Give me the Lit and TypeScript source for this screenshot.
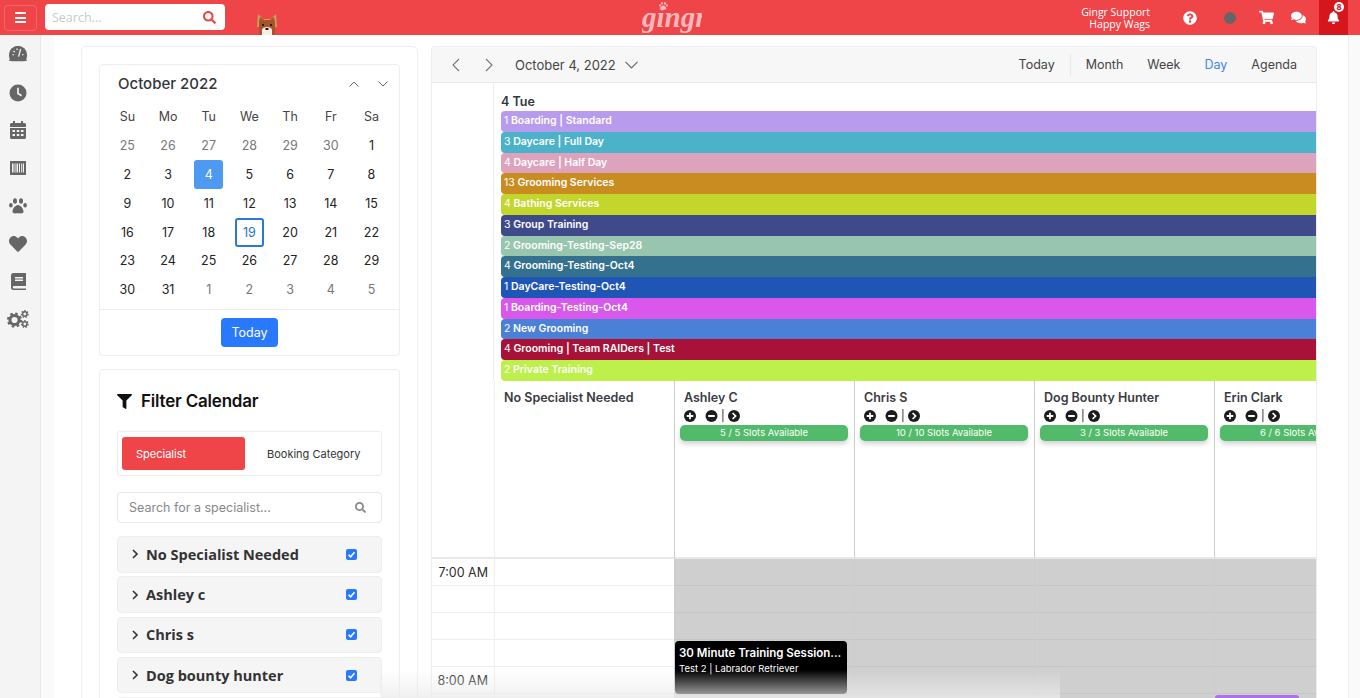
import { LitElement, html, css } from "lit";
import { customElement } from "lit/decorators.js";

const P = {
  search:
    "M505 442.7L405.3 343c-4.5-4.5-10.6-7-17-7H372c27.6-35.3 44-79.7 44-128C416 93.1 322.9 0 208 0S0 93.1 0 208s93.1 208 208 208c48.3 0 92.7-16.4 128-44v16.3c0 6.4 2.5 12.5 7 17l99.7 99.7c9.4 9.4 24.6 9.4 33.9 0l28.3-28.3c9.4-9.4 9.4-24.6.1-34zM208 336c-70.7 0-128-57.2-128-128 0-70.7 57.2-128 128-128 70.7 0 128 57.2 128 128 0 70.7-57.2 128-128 128z",
  heart:
    "M462.3 62.6C407.5 15.9 326 24.3 275.7 76.2L256 96.5l-19.7-20.3C186.1 24.3 104.5 15.9 49.7 62.6c-62.8 53.6-66.1 149.8-9.9 207.9l193.5 199.8c12.5 12.9 32.8 12.9 45.3 0l193.5-199.8c56.3-58.1 53-154.3-9.8-207.9z",
  bell:
    "M224 512c35.32 0 63.97-28.65 63.97-64H160.03c0 35.35 28.65 64 63.97 64zm215.39-149.71c-19.32-20.76-55.47-51.99-55.47-154.29 0-77.7-54.48-139.9-127.94-155.16V32c0-17.67-14.32-32-31.98-32s-31.98 14.33-31.98 32v20.84C118.56 68.1 64.08 130.3 64.08 208c0 102.3-36.15 133.53-55.47 154.29-6 6.45-8.66 14.16-8.61 21.71.11 16.4 12.98 32 32.1 32h383.8c19.12 0 32-15.6 32.1-32 .05-7.55-2.61-15.27-8.61-21.71z",
  cart:
    "M528.12 301.319l47.273-208C578.806 78.301 567.391 64 551.99 64H159.208l-9.166-44.81C147.758 8.021 137.93 0 126.529 0H24C10.745 0 0 10.745 0 24v16c0 13.255 10.745 24 24 24h69.883l70.248 343.435C147.325 417.1 136 435.222 136 456c0 30.928 25.072 56 56 56s56-25.072 56-56c0-15.674-6.447-29.835-16.824-40h209.647C430.447 426.165 424 440.326 424 456c0 30.928 25.072 56 56 56s56-25.072 56-56c0-22.172-12.888-41.332-31.579-50.405l5.517-24.276c3.413-15.018-8.002-29.319-23.403-29.319H218.117l-6.545-32h293.145c11.206 0 20.92-7.754 23.403-18.681z",
  comments:
    "M416 192c0-88.4-93.1-160-208-160S0 103.6 0 192c0 34.3 14.1 65.9 38 92-13.4 30.2-35.5 54.2-35.8 54.5-2.2 2.3-2.8 5.7-1.5 8.7S4.8 352 8 352c36.6 0 66.9-12.3 88.7-25 32.2 15.7 70.3 25 111.3 25 114.9 0 208-71.6 208-160zm122 220c23.9-26 38-57.7 38-92 0-66.9-53.5-124.2-129.3-148.1.9 6.6 1.3 13.3 1.3 20.1 0 105.9-107.7 192-240 192-10.8 0-21.3-.8-31.7-1.9C207.8 439.6 281.8 480 368 480c41 0 79.1-9.2 111.3-25 21.8 12.7 52.1 25 88.7 25 3.2 0 6.1-1.9 7.3-4.8 1.3-2.9.7-6.3-1.5-8.7-.3-.3-22.4-24.2-35.8-54.5z",
  question:
    "M504 256c0 136.997-111.043 248-248 248S8 392.997 8 256C8 119.083 119.043 8 256 8s248 111.083 248 248zM262.655 90c-54.497 0-89.255 22.957-116.549 63.758-3.536 5.286-2.353 12.415 2.715 16.258l34.699 26.31c5.205 3.947 12.621 3.008 16.665-2.122 17.864-22.658 30.113-35.797 57.303-35.797 20.429 0 45.698 13.148 45.698 32.958 0 14.976-12.363 22.667-32.534 33.976C247.128 238.528 216 254.941 216 296v4c0 6.627 5.373 12 12 12h56c6.627 0 12-5.373 12-12v-1.333c0-28.462 83.186-29.647 83.186-106.667 0-58.002-60.165-102-116.531-102zM256 338c-25.365 0-46 20.635-46 46 0 25.364 20.635 46 46 46s46-20.636 46-46c0-25.365-20.635-46-46-46z",
  filter:
    "M487.976 0H24.028C2.71 0-8.047 25.866 7.058 40.971L192 225.941V432c0 7.831 3.821 15.17 10.237 19.662l80 55.98C298.02 518.69 320 507.493 320 487.98V225.941l184.947-184.97C520.021 25.896 509.338 0 487.976 0z",
};

const icon = (d: string, size: number, vb = "0 0 512 512") =>
  html`<svg class="ico" width=${size} height=${size} viewBox=${vb}><path d=${d}></path></svg>`;

const NAV = [
  html`<svg width="20" height="20" viewBox="0 0 20 20"><path d="M1 16.5a9.5 9.5 0 0 1 18 0z" fill="#666" transform="translate(0 -1.5) scale(1 1.06)"></path><circle cx="10" cy="10" r="9.2" fill="#666" clip-path="inset(0 0 3px 0)"></circle><path d="M10.6 11.6 12.6 4M4.5 9.5l1.4.5M5.5 6l1.2 1M9 3.6v1.4M15.5 9.5l-1.4.5" stroke="#f4f4f4" stroke-width="1.3" fill="none"></path></svg>`,
  html`<svg width="18" height="18" viewBox="0 0 18 18"><circle cx="9" cy="9" r="8.5" fill="#666"></circle><path d="M9 3.8V9.6l3.6 2.2" stroke="#f4f4f4" stroke-width="1.7" fill="none"></path></svg>`,
  html`<svg width="16" height="18" viewBox="0 0 16 18"><path d="M3 0h2v2h6V0h2v2h1.5A1.5 1.5 0 0 1 16 3.5V6H0V3.5A1.5 1.5 0 0 1 1.500 2H3zM0 7h16v9.500a1.500 1.500 0 0 1-1.500 1.500h-13A1.500 1.500 0 0 1 0 16.500z" fill="#666"></path><path d="M2.500 9h2.500v2H2.500zm4.300 0h2.500v2H6.800zm4.200 0h2.500v2H11zM2.500 13h2.500v2H2.500zm4.300 0h2.500v2H6.800zm4.200 0h2.500v2H11z" fill="#f4f4f4"></path></svg>`,
  html`<svg width="16" height="14" viewBox="0 0 16 14"><path d="M0 0h16v14H0z" fill="#666"></path><path d="M2 2.500h1.500v9H2zm2.500 0h1v9h-1zm2 0h1.500v9H6.500zm2.500 0h1v9H9zm2 0h.8v9H11zm1.800 0h1.200v9h-1.200z" fill="#f4f4f4"></path></svg>`,
  html`<svg width="18" height="16" viewBox="0 0 18 16"><ellipse cx="1.900" cy="7.200" rx="1.800" ry="2.200" fill="#666"></ellipse><ellipse cx="6" cy="3" rx="2" ry="2.800" fill="#666"></ellipse><ellipse cx="12" cy="3" rx="2" ry="2.800" fill="#666"></ellipse><ellipse cx="16.100" cy="7.200" rx="1.800" ry="2.200" fill="#666"></ellipse><path d="M9 7c2.800 0 5.500 4 5.500 6.500 0 2.500-3 1.800-5.500 1.800s-5.500.7-5.500-1.800C3.500 11 6.200 7 9 7z" fill="#666"></path></svg>`,
  html`<svg width="18" height="18" viewBox="0 0 512 512"><path d=${P.heart} fill="#666"></path></svg>`,
  html`<svg width="15" height="17" viewBox="0 0 15 17"><path d="M2.500 0H15v13H3a1 1 0 0 0 0 2.500h12V17H2.500A2.500 2.500 0 0 1 0 14.500v-12A2.500 2.500 0 0 1 2.500 0z" fill="#666"></path><path d="M4 4h8v1.500H4zm0 2.500h8V8H4z" fill="#f4f4f4"></path></svg>`,
  html`<svg width="22" height="18" viewBox="0 0 22 18"><circle cx="7.500" cy="10" r="4.600" fill="none" stroke="#666" stroke-width="3"></circle><circle cx="7.500" cy="10" r="6.500" fill="none" stroke="#666" stroke-width="2.200" stroke-dasharray="2.500 2.600"></circle><circle cx="17.800" cy="4" r="2.200" fill="none" stroke="#666" stroke-width="1.500"></circle><circle cx="17.800" cy="4" r="3.400" fill="none" stroke="#666" stroke-width="1.200" stroke-dasharray="1.500 1.500"></circle><circle cx="17.800" cy="14" r="2.200" fill="none" stroke="#666" stroke-width="1.500"></circle><circle cx="17.800" cy="14" r="3.400" fill="none" stroke="#666" stroke-width="1.200" stroke-dasharray="1.500 1.500"></circle></svg>`,
];

const WEEKDAYS = ["Su", "Mo", "Tu", "We", "Th", "Fr", "Sa"];
const DAYS: [number, boolean][] = [
  ...[25, 26, 27, 28, 29, 30].map((d): [number, boolean] => [d, true]),
  ...Array.from({ length: 31 }, (_, i): [number, boolean] => [i + 1, false]),
  ...[1, 2, 3, 4, 5].map((d): [number, boolean] => [d, true]),
];

const BARS: [string, string, string][] = [
  ["1", "Boarding | Standard", "#b89bec"],
  ["3", "Daycare | Full Day", "#4cb2c9"],
  ["4", "Daycare | Half Day", "#dda3bd"],
  ["13", "Grooming Services", "#c98c20"],
  ["4", "Bathing Services", "#c2d62c"],
  ["3", "Group Training", "#3f4a8a"],
  ["2", "Grooming-Testing-Sep28", "#97c5ad"],
  ["4", "Grooming-Testing-Oct4", "#33718f"],
  ["1", "DayCare-Testing-Oct4", "#1f55b5"],
  ["1", "Boarding-Testing-Oct4", "#d957ea"],
  ["2", "New Grooming", "#4a80d6"],
  ["4", "Grooming | Team RAIDers | Test", "#a81238"],
  ["2", "Private Training", "#bdf04b"],
];

const STAFF: [string, string][] = [
  ["Ashley C", "5 / 5 Slots Available"],
  ["Chris S", "10 / 10 Slots Available"],
  ["Dog Bounty Hunter", "3 / 3 Slots Available"],
  ["Erin Clark", "6 / 6 Slots Available"],
];

const FILTERS = ["No Specialist Needed", "Ashley c", "Chris s", "Dog bounty hunter", "Erin clark"];
const SLOTS = [0, 1, 2, 3, 4, 5];

@customElement("app-root")
export class AppRoot extends LitElement {
  static styles = css`
    :host {
      display: block;
      height: 698px;
      overflow: hidden;
      position: relative;
      background: #fff;
      font-family: Inter, "Liberation Sans", sans-serif;
      color: #333;
    }
    svg {
      display: block;
      flex: none;
    }
    .ico {
      fill: currentColor;
    }
    .topbar {
      height: 35px;
      background: #ef4549;
      display: flex;
      align-items: center;
      padding: 0 12px 0 4px;
      color: #fff;
      font-family: "Open Sans", sans-serif;
    }
    .left-group,
    .right-group {
      flex: 1;
      display: flex;
      align-items: center;
      height: 100%;
    }
    .right-group {
      justify-content: flex-end;
    }
    .burger {
      width: 33px;
      height: 26px;
      border: 1px solid #f2666a;
      border-radius: 4px;
      box-sizing: border-box;
      display: flex;
      flex-direction: column;
      justify-content: center;
      align-items: center;
      gap: 2.5px;
      margin-right: 8px;
    }
    .burger i {
      display: block;
      width: 11px;
      height: 2px;
      background: #fff;
    }
    .top-search {
      width: 180px;
      height: 26px;
      background: #fff;
      border-radius: 4px;
      box-sizing: border-box;
      padding: 0 9px 0 7px;
      display: flex;
      align-items: center;
      justify-content: space-between;
      font-size: 12.5px;
      color: #c9c9c9;
      margin-bottom: 1px;
    }
    .top-search .ico {
      color: #ef4549;
    }
    .dog {
      align-self: flex-end;
      margin-left: 31px;
    }
    .logo {
      position: relative;
      margin-right: 8px;
      width: 60px;
      height: 35px;
      overflow: hidden;
      color: #fbb9bb;
      font: italic bold 29px/33px "Liberation Serif", serif;
      text-align: center;
    }
    .logo svg {
      position: absolute;
      left: 17px;
      top: 2px;
    }
    .logo span {
      position: absolute;
      left: 0;
      right: 0;
      top: 1px;
    }
    .who {
      font-size: 10.5px;
      line-height: 12px;
      text-align: right;
      margin-right: 22px;
    }
    .tool {
      width: 36px;
      display: flex;
      justify-content: center;
    }
    .avatar {
      width: 12px;
      height: 12px;
      border-radius: 50%;
      background: #666;
    }
    .bell {
      position: relative;
      width: 29px;
      height: 35px;
      margin-left: 3px;
      background: #d5161d;
      display: flex;
      align-items: center;
      justify-content: center;
    }
    .badge {
      position: absolute;
      top: 2px;
      right: 4px;
      width: 10px;
      height: 10px;
      border-radius: 50%;
      background: #fff;
      color: #c4161c;
      font: 700 9px/10px "Open Sans", sans-serif;
      text-align: center;
    }
    .shell {
      display: flex;
      height: 663px;
    }
    .sidebar {
      width: 41px;
      box-sizing: border-box;
      flex: none;
      background: #f4f4f4;
      border-right: 1px solid #e8e8e8;
      padding-top: 1px;
      display: grid;
      grid-auto-rows: 37.8px;
      justify-items: center;
      align-items: center;
      padding-right: 4px;
    }
    .gutter {
      width: 13px;
      flex: none;
      background: #fafafa;
    }
    .gutter.end {
      width: 11px;
      border-left: 1px solid #eee;
    }
    .content {
      flex: 1;
      display: flex;
      gap: 13px;
      padding: 11px 32px 0 27px;
      overflow: hidden;
    }
    .side-panel {
      width: 337px;
      flex: none;
      box-sizing: border-box;
      height: 800px;
      border: 1px solid #eee;
      border-radius: 5px;
      padding: 17px;
    }
    .card {
      border: 1px solid #eee;
      border-radius: 4px;
      background: #fff;
    }
    .cal-card {
      height: 292px;
      box-sizing: border-box;
      margin-bottom: 13px;
      display: flex;
      flex-direction: column;
    }
    .cal-head {
      display: flex;
      align-items: center;
      justify-content: space-between;
      height: 37px;
      padding: 0 11px 0 18px;
      font-size: 15px;
      font-weight: 500;
      color: #33353b;
    }
    .cal-arrows {
      display: flex;
      gap: 19px;
      color: #666;
    }
    .cal-grid {
      display: grid;
      grid-template-columns: repeat(7, 40.700px);
      grid-auto-rows: 28.900px;
      padding: 0 7px;
      font-size: 12.500px;
      color: #222;
      flex: 1;
      align-content: start;
    }
    .cal-grid > div {
      display: flex;
      align-items: center;
      justify-content: center;
    }
    .cal-grid .wd {
      color: #444;
    }
    .cal-grid .muted {
      color: #777;
    }
    .cal-grid b {
      font-weight: 400;
      width: 29px;
      height: 29px;
      box-sizing: border-box;
      display: flex;
      align-items: center;
      justify-content: center;
      border-radius: 3px;
    }
    .cal-grid b.sel {
      background: #4e99f1;
      color: #fff;
    }
    .cal-grid b.now {
      border: 2px solid #2979d9;
      color: #2271d0;
    }
    .cal-foot {
      height: 45px;
      border-top: 1px solid #eee;
      display: flex;
      align-items: center;
      justify-content: center;
    }
    .today-btn {
      width: 57px;
      height: 29px;
      border-radius: 4px;
      background: #2979ff;
      color: #fff;
      font-size: 12.500px;
      display: flex;
      align-items: center;
      justify-content: center;
    }
    .filter-card {
      padding: 17px 17px 0;
      height: 500px;
    }
    .filter-title {
      display: flex;
      align-items: center;
      gap: 9px;
      height: 28px;
      margin-bottom: 16px;
      font-size: 17px;
      font-weight: 600;
      letter-spacing: -0.2px;
      color: #111;
    }
    .tabs {
      height: 45px;
      box-sizing: border-box;
      border: 1px solid #eee;
      border-radius: 3px;
      padding: 5px 4px;
      display: flex;
      align-items: stretch;
      font-size: 11px;
      margin-bottom: 16px;
    }
    .tab-on {
      width: 123px;
      background: #ef4549;
      color: #fff;
      border-radius: 3px;
      display: flex;
      align-items: center;
      padding-left: 14px;
      box-sizing: border-box;
    }
    .tab-off {
      display: flex;
      align-items: center;
      padding-left: 22px;
      color: #333;
    }
    .spec-search {
      height: 31px;
      box-sizing: border-box;
      border: 1px solid #e6e6e6;
      border-radius: 4px;
      display: flex;
      align-items: center;
      justify-content: space-between;
      padding: 0 15px 0 11px;
      font-size: 12.500px;
      color: #888;
      margin-bottom: 13px;
    }
    .spec-search .ico {
      color: #888;
    }
    .spec-row {
      height: 36.500px;
      box-sizing: border-box;
      background: #f5f5f5;
      border: 1px solid #eee;
      border-radius: 4px;
      margin-bottom: 3.800px;
      display: flex;
      align-items: center;
      padding: 0 24px 0 14px;
      gap: 7px;
      font: 700 14.500px "Open Sans", sans-serif;
      color: #333;
    }
    .spec-row span {
      flex: 1;
    }
    .check {
      width: 11px;
      height: 11px;
      border-radius: 2px;
      background: #2979ff;
    }
    .sched {
      width: 886px;
      flex: none;
      box-sizing: border-box;
      height: 700px;
      border: 1px solid #eee;
      border-radius: 3px 3px 0 0;
      overflow: hidden;
    }
    .sched-bar {
      height: 35px;
      background: #f7f7f7;
      border-bottom: 1px solid #e9e9e9;
      display: flex;
      align-items: center;
      padding: 0 19px 0 19px;
      font-size: 12.500px;
      color: #444;
    }
    .sched-bar .ico-stroke {
      color: #777;
    }
    .date-pick {
      margin-left: 21px;
      display: flex;
      align-items: center;
      gap: 9px;
      font-size: 13px;
    }
    .nav-next {
      margin-left: 23px;
    }
    .views {
      margin-left: auto;
      display: flex;
      align-items: center;
      gap: 24px;
      font-size: 12.500px;
    }
    .views .sep {
      width: 1px;
      height: 22px;
      background: #e4e8ee;
      margin: 0 -9px;
    }
    .views .on {
      color: #3d85f0;
    }
    .allday {
      height: 298px;
      display: flex;
    }
    .corner {
      width: 62px;
      flex: none;
      border-right: 1px solid #eee;
      box-sizing: border-box;
    }
    .bars {
      flex: 1;
      padding: 10px 0 0 7px;
      min-width: 0;
    }
    .day-label {
      height: 18px;
      font-size: 12.500px;
      font-weight: 600;
      color: #33353b;
      line-height: 17px;
    }
    .bar {
      height: 20.770px;
      box-sizing: border-box;
      border-radius: 4px 0 0 4px;
      padding-left: 3px;
      color: #fff;
      font-size: 10.500px;
      font-weight: 600;
      line-height: 19px;
      white-space: nowrap;
    }
    .bar em {
      font-style: normal;
      font-weight: 400;
    }
    .cols {
      display: grid;
      grid-template-columns: 62px repeat(5, 180px);
    }
    .head {
      height: 178px;
      box-sizing: border-box;
      border-left: 1px solid #ccc;
      border-bottom: 2px solid #e8e8e8;
      padding: 8px 5px 0;
      overflow: hidden;
    }
    .head.first {
      border-left: 1px solid #eee;
    }
    .head-name {
      padding-left: 4px;
      font-size: 12.500px;
      font-weight: 600;
      color: #3a3b42;
      line-height: 18px;
    }
    .head-tools {
      display: flex;
      align-items: center;
      padding-left: 4px;
      height: 18px;
      font-size: 11px;
      color: #222;
    }
    .head-tools svg:nth-child(2) {
      margin-left: 9px;
    }
    .head-tools span {
      margin: 0 3px 0 3px;
    }
    .pill {
      height: 16px;
      width: 168px;
      margin-top: 0;
      border-radius: 5px;
      background: #52bb6b;
      color: #fff;
      font-size: 9.500px;
      line-height: 16px;
      text-align: center;
      box-shadow: 0 3px 5px rgba(0, 0, 0, 0.18);
    }
    .corner-head {
      border-bottom: 2px solid #e8e8e8;
    }
    .col {
      position: relative;
      border-left: 1px solid #ccc;
      box-sizing: border-box;
    }
    .col.time {
      border-left: 0;
    }
    .col.first {
      border-left: 1px solid #eee;
    }
    .slot {
      height: 27px;
      box-sizing: border-box;
      border-bottom: 1px solid #eee;
    }
    .col.busy {
      background: #cfcfcf;
    }
    .col.busy .slot {
      border-bottom-color: #c6c6c6;
    }
    .time .slot {
      font-size: 12.500px;
      line-height: 27px;
      text-align: right;
      padding-right: 6px;
      color: #2c2c2c;
    }
    .event {
      position: absolute;
      left: 0;
      top: 82px;
      width: 172px;
      height: 53px;
      background: #000;
      color: #fff;
      border-radius: 4px;
      box-sizing: border-box;
      padding: 5px 4px;
    }
    .event h4 {
      margin: 0;
      font-size: 11.500px;
      font-weight: 600;
      line-height: 14px;
      white-space: nowrap;
    }
    .event p {
      margin: 3px 0 0;
      font-size: 9.500px;
      line-height: 12px;
    }
    .mini {
      position: absolute;
      left: 0;
      top: 136px;
      width: 84px;
      height: 20px;
      background: #b070ea;
      border-radius: 3px;
    }
    .fade {
      position: absolute;
      left: 380px;
      right: 300px;
      bottom: 0;
      height: 28px;
      background: linear-gradient(rgba(235, 235, 235, 0), rgba(235, 235, 235, 0.75));
      pointer-events: none;
    }
  `;

  private _headTools() {
    return html`<div class="head-tools">
      <svg width="12" height="12" viewBox="0 0 12 12"><circle cx="6" cy="6" r="6" fill="#1c1c1c"></circle><path d="M6 2.700v6.600M2.700 6h6.600" stroke="#fff" stroke-width="1.800"></path></svg>
      <svg width="13" height="12" viewBox="0 0 12 12"><circle cx="6" cy="6" r="6" fill="#1c1c1c"></circle><path d="M2.700 6h6.600" stroke="#fff" stroke-width="2"></path></svg>
      <span>|</span>
      <svg width="12" height="12" viewBox="0 0 12 12"><circle cx="6" cy="6" r="6" fill="#1c1c1c"></circle><path d="M4.600 3l3 3-3 3" stroke="#fff" stroke-width="1.700" fill="none"></path></svg>
    </div>`;
  }

  private _topbar() {
    return html`<header class="topbar">
      <div class="left-group">
        <div class="burger"><i></i><i></i><i></i></div>
        <div class="top-search">Search... ${icon(P.search, 13)}</div>
        <svg class="dog" width="22" height="22" viewBox="0 0 22 22">
          <path d="M1 14 2 1l5 5h8l5-5 1 13z" fill="#c9a060"></path>
          <path d="M3 9l1-5 4 3h6l4-3 1 5v13H3z" fill="#a8542a"></path>
          <path d="M6 22v-5c0-2 3-3 5-3s5 1 5 3v5z" fill="#f5efe6"></path>
          <rect x="6" y="11" width="2" height="2" fill="#2a1a14"></rect>
          <rect x="14" y="11" width="2" height="2" fill="#2a1a14"></rect>
          <rect x="9.500" y="15" width="3" height="2" fill="#2a1a14"></rect>
        </svg>
      </div>
      <div class="logo">
        <svg width="9" height="8" viewBox="0 0 18 16" fill="#fbb9bb"><ellipse cx="2" cy="7" rx="2" ry="2.300"></ellipse><ellipse cx="6" cy="3" rx="2" ry="2.800"></ellipse><ellipse cx="12" cy="3" rx="2" ry="2.800"></ellipse><ellipse cx="16" cy="7" rx="2" ry="2.300"></ellipse><path d="M9 7c3 0 5.500 4 5.500 6.500S11.500 15 9 15s-5.500 1-5.500-1.500S6 7 9 7z"></path></svg>
        <span>gingr</span>
      </div>
      <div class="right-group">
        <div class="who">Gingr Support<br />Happy Wags</div>
        <div class="tool">${icon(P.question, 14)}</div>
        <div class="tool" style="width:44px"><div class="avatar"></div></div>
        <div class="tool" style="width:28px">${icon(P.cart, 15, "0 0 576 512")}</div>
        <div class="tool">${icon(P.comments, 15, "0 0 576 512")}</div>
        <div class="bell">
          ${icon(P.bell, 13, "0 0 448 512")}
          <div class="badge">8</div>
        </div>
      </div>
    </header>`;
  }

  private _calendar() {
    return html`<section class="card cal-card">
      <div class="cal-head">
        October 2022
        <div class="cal-arrows">
          <svg width="10" height="6" viewBox="0 0 10 6"><path d="M.5 5.500 5 1l4.500 4.500" fill="none" stroke="#666"></path></svg>
          <svg width="10" height="6" viewBox="0 0 10 6"><path d="M.5.500 5 5 9.500.5" fill="none" stroke="#666"></path></svg>
        </div>
      </div>
      <div class="cal-grid">
        ${WEEKDAYS.map((d) => html`<div class="wd">${d}</div>`)}
        ${DAYS.map(
          ([d, muted]) => html`<div class=${muted ? "muted" : ""}>
            <b class=${!muted && d === 4 ? "sel" : !muted && d === 19 ? "now" : ""}>${d}</b>
          </div>`
        )}
      </div>
      <div class="cal-foot"><div class="today-btn">Today</div></div>
    </section>`;
  }

  private _filters() {
    return html`<section class="card filter-card">
      <div class="filter-title">${icon(P.filter, 15)} Filter Calendar</div>
      <div class="tabs">
        <div class="tab-on">Specialist</div>
        <div class="tab-off">Booking Category</div>
      </div>
      <div class="spec-search">Search for a specialist... ${icon(P.search, 11)}</div>
      ${FILTERS.map(
        (name) => html`<div class="spec-row">
          <svg width="7" height="10" viewBox="0 0 7 10"><path d="M1 1l4 4-4 4" fill="none" stroke="#333" stroke-width="1.600"></path></svg>
          <span>${name}</span>
          <svg class="check" viewBox="0 0 11 11"><path d="M2.500 5.700 4.600 7.800 8.500 3.300" fill="none" stroke="#fff" stroke-width="1.600"></path></svg>
        </div>`
      )}
    </section>`;
  }

  private _schedule() {
    return html`<section class="sched">
      <div class="sched-bar">
        <svg class="ico-stroke" width="10" height="14" viewBox="0 0 10 14"><path d="M8 1 2 7l6 6" fill="none" stroke="currentColor" stroke-width="1.100"></path></svg>
        <svg class="ico-stroke nav-next" width="10" height="14" viewBox="0 0 10 14"><path d="M2 1l6 6-6 6" fill="none" stroke="currentColor" stroke-width="1.100"></path></svg>
        <div class="date-pick">
          October 4, 2022
          <svg width="13" height="8" viewBox="0 0 13 8"><path d="M.5.800 6.500 7l6-6.200" fill="none" stroke="#666" stroke-width="1.100"></path></svg>
        </div>
        <div class="views">
          <span>Today</span><i class="sep"></i><span>Month</span><span>Week</span>
          <span class="on">Day</span><span>Agenda</span>
        </div>
      </div>
      <div class="allday">
        <div class="corner"></div>
        <div class="bars">
          <div class="day-label">4 Tue</div>
          ${BARS.map(
            ([n, label, color]) =>
              html`<div class="bar" style="background:${color}"><em>${n}</em> ${label}</div>`
          )}
        </div>
      </div>
      <div class="cols">
        <div class="corner-head"></div>
        <div class="head first"><div class="head-name">No Specialist Needed</div></div>
        ${STAFF.map(
          ([name, slots]) => html`<div class="head">
            <div class="head-name">${name}</div>
            ${this._headTools()}
            <div class="pill">${slots}</div>
          </div>`
        )}
        <div class="col time">
          ${SLOTS.map((i) => html`<div class="slot">${i === 0 ? "7:00 AM" : i === 4 ? "8:00 AM" : ""}</div>`)}
        </div>
        <div class="col first">${SLOTS.map(() => html`<div class="slot"></div>`)}</div>
        ${STAFF.map(
          (_, c) => html`<div class="col busy">
            ${SLOTS.map(() => html`<div class="slot"></div>`)}
            ${c === 0
              ? html`<div class="event">
                  <h4>30 Minute Training Session...</h4>
                  <p>Test 2 | Labrador Retriever</p>
                </div>`
              : ""}
            ${c === 3 ? html`<div class="mini"></div>` : ""}
          </div>`
        )}
      </div>
    </section>`;
  }

  render() {
    return html`
      ${this._topbar()}
      <div class="shell">
        <nav class="sidebar">${NAV}</nav>
        <div class="gutter"></div>
        <main class="content">
          <aside class="side-panel">${this._calendar()} ${this._filters()}</aside>
          ${this._schedule()}
        </main>
        <div class="gutter end"></div>
      </div>
      <div class="fade"></div>
    `;
  }
}
